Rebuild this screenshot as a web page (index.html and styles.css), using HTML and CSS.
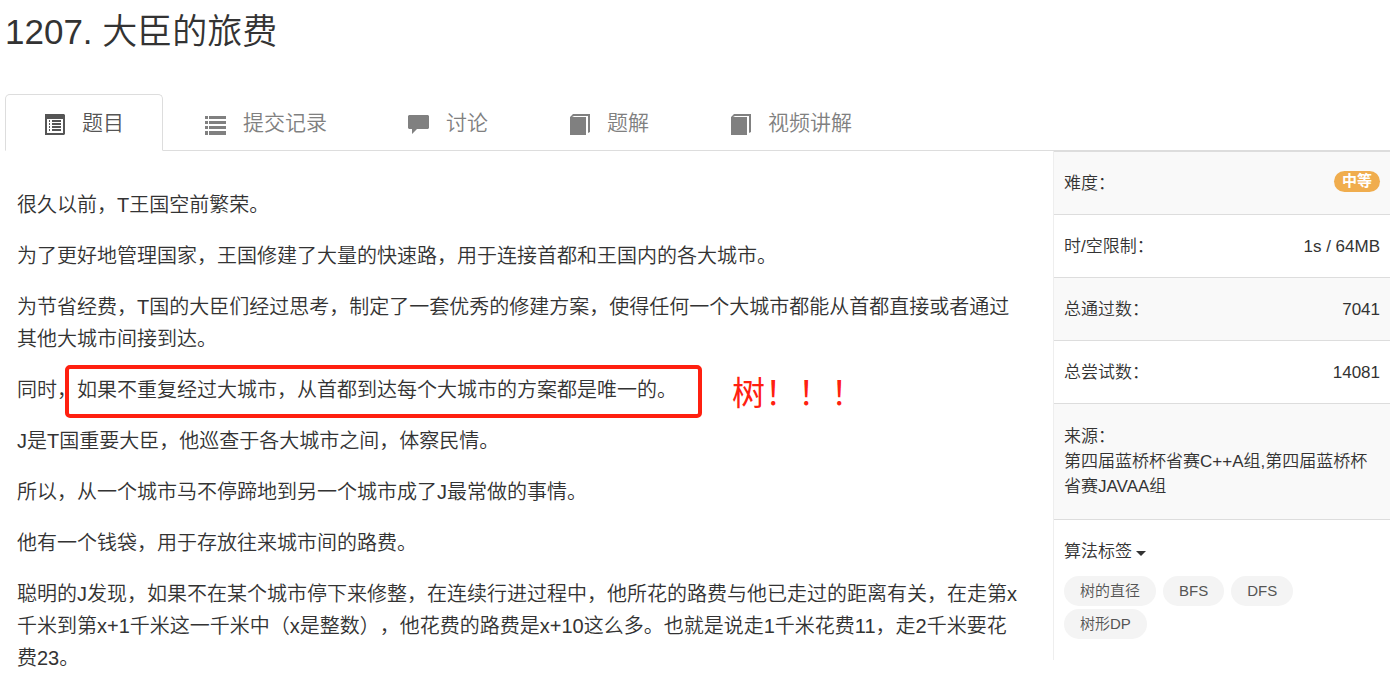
FILE: index.html
```html
<!DOCTYPE html>
<html lang="zh-CN">
<head>
    <meta charset="UTF-8">
    <meta name="viewport" content="width=device-width, initial-scale=1.0">
    <title>1207. 大臣的旅费</title>
    <link rel="stylesheet" href="styles.css">
</head>
<body>
    <h1 class="title">1207. 大臣的旅费</h1>

    <nav class="tabs">
        <a class="tab active" href="#problem">
            <svg class="icon" viewBox="0 0 21 21"><path fill-rule="evenodd" d="M1 0h19l1 1v19l-1 1H1V0zM3 5v14h16V5z"/><path d="M5 6h1v2H5zM8 6h9v2H8zM5 9h1v2H5zM8 9h9v2H8zM5 12h1v2H5zM8 12h9v2H8zM5 15h1v2H5zM8 15h9v2H8z"/></svg>
            题目
        </a>
        <a class="tab" href="#submissions">
            <svg class="icon" viewBox="0 0 21 21"><path d="M0 2h3v3H0zM4 2h17v3H4zM0 7h3v3H0zM4 7h17v3H4zM0 12h3v3H0zM4 12h17v3H4zM0 17h3v4H0zM4 17h17v4H4z"/></svg>
            提交记录
        </a>
        <a class="tab" href="#discussion">
            <svg class="icon" viewBox="0 0 21 21"><path d="M1 1h19l1 1v12l-1 1H9l-5 5v-5H1l-1-1V2z"/></svg>
            讨论
        </a>
        <a class="tab" href="#solution">
            <svg class="icon" viewBox="0 0 21 21"><path d="M4 0h17v18l-2 1V2H5L3 3h14v18H1V3z"/></svg>
            题解
        </a>
        <a class="tab" href="#video">
            <svg class="icon" viewBox="0 0 21 21"><path d="M4 0h17v18l-2 1V2H5L3 3h14v18H1V3z"/></svg>
            视频讲解
        </a>
    </nav>

    <div class="content">
        <main class="problem" id="problem">
            <p>很久以前，T王国空前繁荣。</p>
            <p>为了更好地管理国家，王国修建了大量的快速路，用于连接首都和王国内的各大城市。</p>
            <p>为节省经费，T国的大臣们经过思考，制定了一套优秀的修建方案，使得任何一个大城市都能从首都直接或者通过其他大城市间接到达。</p>
            <p>同时，<span class="marked">如果不重复经过大城市，从首都到达每个大城市的方案都是唯一的。<span class="note">树！！！</span></span></p>
            <p>J是T国重要大臣，他巡查于各大城市之间，体察民情。</p>
            <p>所以，从一个城市马不停蹄地到另一个城市成了J最常做的事情。</p>
            <p>他有一个钱袋，用于存放往来城市间的路费。</p>
            <p>聪明的J发现，如果不在某个城市停下来修整，在连续行进过程中，他所花的路费与他已走过的距离有关，在走第x千米到第x+1千米这一千米中（x是整数），他花费的路费是x+10这么多。也就是说走1千米花费11，走2千米要花费23。</p>
        </main>

        <aside class="sidebar">
            <table class="info">
                <tr>
                    <th scope="row">难度：</th>
                    <td><span class="badge">中等</span></td>
                </tr>
                <tr>
                    <th scope="row">时/空限制：</th>
                    <td>1s / 64MB</td>
                </tr>
                <tr>
                    <th scope="row">总通过数：</th>
                    <td>7041</td>
                </tr>
                <tr>
                    <th scope="row">总尝试数：</th>
                    <td>14081</td>
                </tr>
                <tr>
                    <td class="source" colspan="2">来源：<br>第四届蓝桥杯省赛C++A组,第四届蓝桥杯省赛JAVAA组</td>
                </tr>
                <tr>
                    <td class="algorithm" colspan="2">
                        <button class="toggle" type="button">算法标签<span class="caret"></span></button>
                        <div class="tags">
                            <a class="tag" href="#diameter">树的直径</a>
                            <a class="tag" href="#bfs">BFS</a>
                            <a class="tag" href="#dfs">DFS</a>
                            <a class="tag" href="#treedp">树形DP</a>
                        </div>
                    </td>
                </tr>
            </table>
        </aside>
    </div>
</body>
</html>
```
FILE: styles.css
```css
* {
    box-sizing: border-box;
}

body {
    margin: 0;
    padding: 0 9px 0 5px;
    font-family: "Liberation Sans", "Noto Sans CJK SC", sans-serif;
    font-weight: 350;
    text-spacing-trim: space-all;
    color: #333;
    background-color: #fff;
}

a {
    color: inherit;
    text-decoration: none;
}

.title {
    margin: 0;
    padding: 12px 0 42px;
    font-size: 35px;
    line-height: 40px;
    font-weight: 350;
}

/* 选项卡 */
.tabs {
    display: flex;
    gap: 3px;
    border-bottom: 1px solid #ddd;
}

.tab {
    display: flex;
    align-items: center;
    gap: 17px;
    margin-bottom: -1px;
    padding: 13px 38px 12px;
    border: 1px solid transparent;
    border-radius: 5px 5px 0 0;
    font-size: 21px;
    line-height: 30px;
    color: #808080;
}

.tab.active {
    border-color: #ddd;
    border-bottom-color: #fff;
    background-color: #fff;
    color: #555;
}

.icon {
    width: 21px;
    height: 21px;
    margin-top: 3px;
    fill: currentColor;
}

.content {
    display: flex;
    align-items: flex-start;
}

/* 题目描述 */
.problem {
    flex: 1;
    padding: 38px 30px 0 12px;
    font-size: 20px;
    line-height: 32px;
}

.problem p {
    margin: 0 0 19px;
}

.marked {
    position: relative;
}

.marked::before {
    content: "";
    position: absolute;
    top: -14px;
    right: -25px;
    bottom: -17px;
    left: -12px;
    border: 4px solid #ff2010;
    border-radius: 5px;
}

.note {
    position: absolute;
    top: -1px;
    left: 100%;
    margin-left: 55px;
    font-size: 33px;
    font-weight: 400;
    white-space: nowrap;
    color: #ff2010;
}

/* 右侧信息 */
.sidebar {
    flex: 0 0 337px;
    border-left: 1px solid #eee;
}

.info {
    width: 100%;
    border-spacing: 0;
    font-size: 17px;
    line-height: 25px;
}

.info th,
.info td {
    padding: 19px 10px 18px;
    border-top: 1px solid #ddd;
    font-weight: 350;
    text-align: left;
    vertical-align: top;
}

.info th + td {
    text-align: right;
}

.info .source {
    padding: 20px 10px;
}

.info tr:nth-child(odd) {
    background-color: #f9f9f9;
}

.badge {
    display: inline-block;
    padding: 0 8px 2px;
    border-radius: 12px;
    background-color: #f0ad4e;
    color: #fff;
    font-size: 15px;
    font-weight: 700;
    line-height: 19px;
    vertical-align: top;
}

.toggle {
    display: flex;
    align-items: center;
    gap: 4px;
    padding: 0;
    border: 0;
    background: none;
    color: #333;
    font: inherit;
}

.caret {
    margin-top: 4px;
    border-top: 5px solid #333;
    border-right: 5px solid transparent;
    border-left: 5px solid transparent;
}

.tags {
    display: flex;
    flex-wrap: wrap;
    gap: 3px 7px;
    padding: 12px 0 3px;
}

.tag {
    padding: 0 16px;
    border-radius: 15px;
    background-color: #f4f4f4;
    color: #555;
    font-size: 15px;
    line-height: 30px;
}
```
